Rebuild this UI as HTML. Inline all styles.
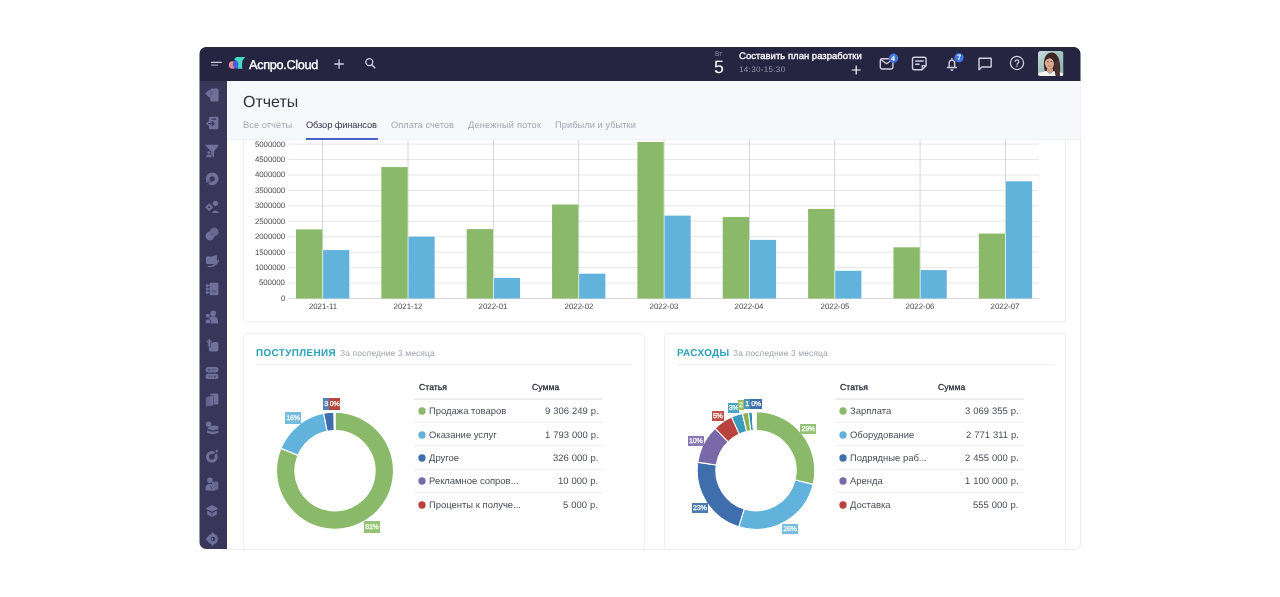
<!DOCTYPE html>
<html><head><meta charset="utf-8"><title>Отчеты</title>
<style>
html,body{margin:0;padding:0;background:#fff;}
body{width:1280px;height:597px;position:relative;overflow:hidden;font-family:"Liberation Sans", sans-serif;}
#win{position:absolute;left:0;top:0;width:1280px;height:597px;will-change:transform;clip-path:inset(47px 199.5px 48px 199.5px round 6.5px);}
#shadow{position:absolute;left:222px;top:78px;width:859.4px;height:471.8px;border-radius:0 0 7px 0;border-right:1px solid #ececee;border-bottom:1px solid #ececee;box-sizing:border-box;}
.abs{position:absolute;}
.t,.tab,.yl,.xl,.row,.amt,.lab{transform:rotate(0.03deg);}
.t{position:absolute;white-space:nowrap;line-height:1;}
.card{position:absolute;border:1px solid #edeff3;border-radius:3px;background:#fff;box-sizing:border-box;}
.tab{position:absolute;top:120.8px;font-size:9.2px;color:#9a9eab;white-space:nowrap;line-height:1;}
.yl{position:absolute;right:995px;font-size:7.85px;color:#4a4a4a;letter-spacing:-0.07px;white-space:nowrap;line-height:1;}
.xl{position:absolute;top:302.8px;width:60px;text-align:center;font-size:7.85px;color:#4a4a4a;white-space:nowrap;line-height:1;}
.row{position:absolute;font-size:9.45px;color:#484b57;white-space:nowrap;line-height:1;}
.amt{position:absolute;font-size:9.45px;color:#484b57;word-spacing:0.35px;white-space:nowrap;line-height:1;text-align:right;}
.dot{position:absolute;width:6.4px;height:6.4px;border-radius:50%;}
.hl{position:absolute;height:1px;background:#eff0f4;}
.lab{position:absolute;font-size:7.1px;color:#f4faf0;text-align:center;white-space:nowrap;letter-spacing:-0.3px;-webkit-text-stroke:0.3px #f4faf0;overflow:hidden;}
</style></head><body>
<div id="shadow"></div>
<div id="win">
<div class="abs" style="left:199px;top:46px;width:883px;height:35px;background:#262541"></div><div class="abs" style="left:199px;top:81px;width:28px;height:470px;background:#38375a"></div><div class="card" style="left:243px;top:130px;width:822.7px;height:191.5px;border-top:none"></div><div class="abs" style="left:227px;top:81px;width:855px;height:57.5px;background:#f6f8fc"></div><div class="abs" style="left:227px;top:138.5px;width:855px;height:1px;background:#eef0f5"></div><svg class="abs" style="left:210px;top:59px" width="14" height="12" viewBox="0 0 14 12"><path d="M1.4 3.4H11.4" stroke="#c9cad8" stroke-width="1.15" stroke-linecap="round" fill="none"/><path d="M1.4 6.1H7.6" stroke="#9697ad" stroke-width="1.15" stroke-linecap="round" fill="none"/></svg><svg class="abs" style="left:228px;top:56px" width="19" height="15" viewBox="0 0 19 15"><ellipse cx="4.6" cy="9" rx="3.8" ry="3.8" fill="#f08598"/><path d="M8.4 3.7C6 4.4 4.8 6.8 4.8 8.6C4.8 10.8 6.4 12.8 8.8 12.8H11.2V3.7Z" fill="#3f63d8"/><path d="M8.6 1H17.4C14.4 3.6 13.2 7 14.6 12.8H10.3V7.4C10.1 5.6 8.8 4.2 6.3 3.5C6.8 2.2 7.6 1.4 8.6 1Z" fill="#45dcc4"/></svg><div class="t" style="left:248.8px;top:58.8px;font-size:12.7px;color:#fff;letter-spacing:-0.31px;-webkit-text-stroke:0.35px #fff">Аспро.Cloud</div><svg class="abs" style="left:333px;top:57.6px" width="12" height="12" viewBox="0 0 12 12"><path d="M6.05 1.2V10.8M1.3 6H10.8" stroke="#cfd0de" stroke-width="1.3" fill="none"/></svg><svg class="abs" style="left:363.5px;top:57.4px" width="12" height="12" viewBox="0 0 12 12"><circle cx="5.3" cy="5.1" r="3.5" stroke="#cfd0de" stroke-width="1.35" fill="none"/><path d="M8 7.9L10.8 10.8" stroke="#cfd0de" stroke-width="1.4" stroke-linecap="round"/></svg><div class="t" style="left:715.4px;top:50.6px;font-size:6.6px;color:#8e8fa6">Вт</div><div class="t" style="left:714.4px;top:58.6px;font-size:17.8px;color:#fff">5</div><div class="t" style="left:738.8px;top:51px;font-size:9.5px;color:#fff;letter-spacing:0.02px;-webkit-text-stroke:0.3px #fff">Составить план разработки</div><div class="t" style="left:738.8px;top:65.6px;font-size:8px;color:#9a9bb0;letter-spacing:0.34px">14:30-15:30</div><svg class="abs" style="left:850px;top:64px" width="12" height="12" viewBox="0 0 12 12"><path d="M6.2 1.5V10.5M1.7 6H10.7" stroke="#fff" stroke-width="1.2" fill="none"/></svg><svg class="abs" style="left:878px;top:50px" width="24" height="24" viewBox="0 0 24 24"><rect x="2.3" y="8.8" width="12.6" height="10.2" rx="1.7" stroke="#cfd0de" stroke-width="1.4" fill="none"/><path d="M3.4 10L8.6 13.8L13.8 10" stroke="#cfd0de" stroke-width="1.3" fill="none" stroke-linejoin="round"/><circle cx="15.5" cy="8.3" r="4.7" fill="#3f74e0"/></svg><div class="t" style="left:891.4px;top:54.6px;font-size:7.4px;color:#fff;-webkit-text-stroke:0.2px #fff">4</div><svg class="abs" style="left:911px;top:55px" width="17" height="17" viewBox="0 0 17 17"><path d="M3.4 2.3H13.2A1.9 1.9 0 0 1 15.1 4.2V10.6L11 14.7H3.4A1.9 1.9 0 0 1 1.5 12.8V4.2A1.9 1.9 0 0 1 3.4 2.3Z" stroke="#cfd0de" stroke-width="1.4" fill="none"/><path d="M15 10.6H11.2V14.4" stroke="#cfd0de" stroke-width="1.2" fill="none"/><path d="M4.2 6H12.6M4.2 9.2H8.6" stroke="#cfd0de" stroke-width="1.6"/></svg><svg class="abs" style="left:943px;top:50px" width="24" height="24" viewBox="0 0 24 24"><path d="M4.4 17.5H13.4M5.9 17.4C6.4 16 6 14.4 6.2 12.4A2.75 2.75 0 0 1 11.6 12.4C11.8 14.4 11.4 16 11.9 17.4" stroke="#cfd0de" stroke-width="1.4" fill="none" stroke-linecap="round" stroke-linejoin="round"/><path d="M8.9 8.4V9.6" stroke="#cfd0de" stroke-width="1.3" stroke-linecap="round"/><path d="M7.6 19.4H10.2A1.3 1.3 0 0 1 7.6 19.4Z" fill="#cfd0de" stroke="#cfd0de" stroke-width="0.5"/><circle cx="16" cy="7.8" r="4.7" fill="#3f74e0"/></svg><div class="t" style="left:957px;top:54.1px;font-size:7.4px;color:#fff;-webkit-text-stroke:0.2px #fff">7</div><svg class="abs" style="left:977px;top:55.5px" width="16" height="16" viewBox="0 0 16 16"><path d="M2.4 2.2H13.6A0.6 0.6 0 0 1 14.2 2.8V10.4A0.6 0.6 0 0 1 13.6 11H5L2 13.8V2.8A0.6 0.6 0 0 1 2.4 2.2Z" stroke="#cfd0de" stroke-width="1.4" fill="none" stroke-linejoin="round"/></svg><svg class="abs" style="left:1008.9px;top:55.2px" width="16" height="16" viewBox="0 0 16 16"><circle cx="8" cy="8" r="6.6" stroke="#cfd0de" stroke-width="1.25" fill="none"/><path d="M6.1 6.5A1.95 1.95 0 0 1 9.95 6.6C9.95 7.9 8 8 8 9.5" stroke="#cfd0de" stroke-width="1.15" fill="none" stroke-linecap="round"/><circle cx="8" cy="11.3" r="0.75" fill="#cfd0de"/></svg><svg class="abs" style="left:1038.3px;top:51px" width="25.5" height="25.2" viewBox="0 0 25 25" preserveAspectRatio="none"><defs><clipPath id="av"><rect width="25" height="25" rx="2.6"/></clipPath><linearGradient id="avg" x1="0" y1="0" x2="1" y2="1"><stop offset="0" stop-color="#c9dadb"/><stop offset="0.5" stop-color="#9fc2bd"/><stop offset="1" stop-color="#8db5b0"/></linearGradient></defs><g clip-path="url(#av)"><rect width="25" height="25" fill="url(#avg)"/><path d="M6.6 19.5C4.6 12 6 2.2 12.8 1.6C19.6 1.4 21.2 9 21.6 14C21.9 18 21.4 22 21.8 25H14L8 20Z" fill="#3a2927"/><ellipse cx="11.2" cy="12.2" rx="4.4" ry="5.9" transform="rotate(-8 11.2 12.2)" fill="#dcaa92"/><path d="M6.4 10.4C7.4 5.6 12.6 4 16.4 7.4C17.6 9 17.4 12 16.8 14.6C16.2 10.6 14.6 8 12.6 7.2C10.4 7 7.8 8.4 6.4 10.4Z" fill="#3a2927"/><ellipse cx="9.6" cy="10.6" rx="0.9" ry="0.5" fill="#3a2927" opacity=".75"/><ellipse cx="13.1" cy="10.2" rx="0.9" ry="0.5" fill="#3a2927" opacity=".75"/><path d="M9.8 14.6Q11.3 15.6 12.8 14.4" stroke="#b86f63" stroke-width=".8" fill="none"/><path d="M0 25V22.4C2 20.8 6 20.6 8.6 19.6L11.6 22.6L14.6 20C17.6 20.2 22.6 20.6 25 22.6V25Z" fill="#f4f0ec"/><path d="M9.2 16.8L14.4 17.2L14.8 20.2L11.6 22.8L8.6 19.8Z" fill="#d39f88"/><path d="M15.6 13C16.6 17 16 21 17.4 25H21.8C21 20 22 14 20 9Z" fill="#4a3230"/></g></svg><svg class="abs" style="left:205.2px;top:88.3px" width="14" height="14" viewBox="0 0 14 14"><rect x="5.2" y=".6" width="8.4" height="12.8" rx="1.5" fill="#70719a"/><path d="M.3 5.6L4.2 1.7 8.1 5.6 4.2 9.5z" fill="#70719a"/><path d="M5.2 2.8L8.1 5.6 5.2 8.4z" fill="#5c5d86"/></svg><svg class="abs" style="left:205.2px;top:116.0px" width="14" height="14" viewBox="0 0 14 14"><path d="M5.4 .7h6.6a1.4 1.4 0 0 1 1.4 1.4v9.8a1.4 1.4 0 0 1-1.4 1.4H5.4a1.4 1.4 0 0 1-1.4-1.4V10L.6 7.6 4 5V2.1A1.4 1.4 0 0 1 5.4.7z" fill="#70719a"/><path d="M3.2 7.6H8.6M6.8 5.4L9 7.6 6.8 9.8" stroke="#38375a" stroke-width="1.3" fill="none"/><path d="M6.6 3.2H11" stroke="#38375a" stroke-width="1.2"/></svg><svg class="abs" style="left:205.2px;top:143.9px" width="14" height="14" viewBox="0 0 14 14"><path d="M.8.8h12.4a.5.5 0 0 1 .4.8L9 7.4v5.2a.6.6 0 0 1-.9.5L6.2 12V7.4L.4 1.6A.5.5 0 0 1 .8.8z" fill="#70719a"/><circle cx="4" cy="8.6" r="1.9" fill="#70719a" stroke="#38375a" stroke-width=".7"/><path d="M.6 13.4a3.4 3.4 0 0 1 6.8 0z" fill="#70719a" stroke="#38375a" stroke-width=".7"/></svg><svg class="abs" style="left:205.2px;top:171.7px" width="14" height="14" viewBox="0 0 14 14"><circle cx="7.2" cy="6.8" r="4.5" fill="none" stroke="#70719a" stroke-width="3.7"/><path d="M1 9.6L5.2 7.4 6.8 10.6 2.6 12.8z" fill="#5c5d86"/><path d="M.4 12.8l3.2-1.9" stroke="#38375a" stroke-width="1"/></svg><svg class="abs" style="left:205.2px;top:199.8px" width="14" height="14" viewBox="0 0 14 14"><path d="M.2 7.2L4.2 3.2l4 4L4.2 11.2z" fill="#70719a"/><path d="M2.8 7.2L4.2 5.8l1.4 1.4L4.2 8.6z" fill="#38375a"/><circle cx="10.5" cy="3.3" r="2.6" fill="#70719a"/><path d="M6.8 13a3.8 3.8 0 0 1 7.2 0z" fill="#70719a"/></svg><svg class="abs" style="left:205.2px;top:227.3px" width="14" height="14" viewBox="0 0 14 14"><circle cx="4.9" cy="9" r="4.4" fill="#70719a"/><circle cx="9.1" cy="5" r="4.4" fill="#70719a" fill-opacity=".85"/><rect x="5.6" y="5.6" width="2.8" height="2.8" fill="#5c5d86"/></svg><svg class="abs" style="left:205.2px;top:254.0px" width="14" height="14" viewBox="0 0 14 14"><path d="M1.8 2.4C4 1.6 5.4 3 7 2.4S10.4.6 12 1.4V7.4C12 9 10.6 10 9 10H2.6A1.6 1.6 0 0 1 1 8.4V3.4A1 1 0 0 1 1.8 2.4z" fill="#70719a"/><path d="M3.4 12.6C8 12.6 11.6 10.4 13.4 6.4" stroke="#70719a" stroke-width="1.5" fill="none" stroke-linecap="round"/></svg><svg class="abs" style="left:205.2px;top:282.1px" width="14" height="14" viewBox="0 0 14 14"><rect x="4.6" y=".7" width="8.8" height="12.6" rx="1.4" fill="#70719a"/><circle cx="2.2" cy="3.6" r="1.5" fill="#70719a"/><circle cx="2.2" cy="7" r="1.5" fill="#70719a"/><circle cx="2.2" cy="10.4" r="1.5" fill="#70719a"/><path d="M2.2 3.6H5M2.2 7H5M2.2 10.4H5" stroke="#70719a" stroke-width="1"/><rect x="6.6" y="8" width="4.8" height="2.4" rx=".6" fill="#5c5d86"/></svg><svg class="abs" style="left:205.2px;top:310.3px" width="14" height="14" viewBox="0 0 14 14"><circle cx="8.2" cy="3.4" r="2.8" fill="#70719a"/><path d="M3.4 13.4V11a4.8 4.8 0 0 1 9.6 0v2.4z" fill="#70719a"/><circle cx="2.9" cy="5.8" r="2" fill="#70719a"/><path d="M.4 13.4v-1.6a2.7 2.7 0 0 1 5.4 0v1.6z" fill="#70719a" stroke="#38375a" stroke-width=".7"/></svg><svg class="abs" style="left:205.2px;top:337.8px" width="14" height="14" viewBox="0 0 14 14"><rect x="3.8" y="4" width="9.6" height="9.4" rx="1.6" fill="#70719a"/><path d="M.4 4.6L4.2.5 8 4.6H5.6V9H2.8V4.6z" fill="#70719a" stroke="#38375a" stroke-width=".6"/></svg><svg class="abs" style="left:205.2px;top:366.0px" width="14" height="14" viewBox="0 0 14 14"><rect x=".6" y="1" width="12.8" height="5.4" rx="2.7" fill="#70719a"/><rect x=".6" y="7.7" width="12.8" height="5.4" rx="2.7" fill="#70719a"/><path d="M3.6 2.2L5.4 3.7 3.6 5.2zM10.4 8.9L8.6 10.4 10.4 11.9z" fill="#38375a"/><rect x="6.2" y="2.8" width="4.6" height="1.8" rx=".9" fill="#5c5d86"/><rect x="3.2" y="9.5" width="4.6" height="1.8" rx=".9" fill="#5c5d86"/></svg><svg class="abs" style="left:205.2px;top:393.0px" width="14" height="14" viewBox="0 0 14 14"><path d="M5.6.6h6.4a1.4 1.4 0 0 1 1.4 1.4v8a1.4 1.4 0 0 1-1.4 1.4H5.6z" fill="#70719a"/><path d="M.6 4.4L5.4 2.6h3.2v10.2L3.8 13.4H.6z" fill="#70719a" fill-opacity=".8" stroke="#38375a" stroke-width=".5"/></svg><svg class="abs" style="left:205.2px;top:421.2px" width="14" height="14" viewBox="0 0 14 14"><circle cx="3.6" cy="3.2" r="2.7" fill="#70719a"/><path d="M2.4 7.6C5 4.4 10 3.6 13.4 5.4V8C10 9.6 5.4 9.6 2.4 7.6z" fill="#70719a"/><path d="M2 9.2C5.4 11 10 11 13.4 9.4v2.4C10 13.6 5.4 13.6 2 11.8z" fill="#70719a"/></svg><svg class="abs" style="left:205.2px;top:449.0px" width="14" height="14" viewBox="0 0 14 14"><circle cx="6.8" cy="7.8" r="4.4" fill="none" stroke="#70719a" stroke-width="3"/><path d="M6.8 7.8L11 3.6" stroke="#38375a" stroke-width="1.6"/><circle cx="11.8" cy="2" r="1.3" fill="#70719a"/></svg><svg class="abs" style="left:205.2px;top:476.8px" width="14" height="14" viewBox="0 0 14 14"><circle cx="4.8" cy="3.2" r="2.7" fill="#70719a"/><path d="M.5 13.4V11a4.3 4.3 0 0 1 8.6 0v2.4z" fill="#70719a"/><path d="M7 4.6h4.8a1.6 1.6 0 0 1 1.6 1.6v4.2c0 1.8-1.6 3-3.2 3H5.6c1.6-1 1.4-2.6 1.4-4z" fill="#70719a" fill-opacity=".85"/><path d="M5 9.4c1.4 0 2 1.2 1.6 2.6" stroke="#38375a" stroke-width=".8" fill="none"/></svg><svg class="abs" style="left:205.2px;top:504.4px" width="14" height="14" viewBox="0 0 14 14"><path d="M7 1L13.6 4.4 7 7.8.4 4.4z" fill="#70719a"/><path d="M2.2 6.6L7 9.2l4.8-2.6v3.8L7 13.2 2.2 10.4z" fill="#70719a"/><path d="M7 9.2v4" stroke="#38375a" stroke-width=".7"/></svg><svg class="abs" style="left:205.2px;top:531.6px" width="14" height="14" viewBox="0 0 14 14"><circle cx="7.6" cy="7" r="5.3" fill="#70719a"/><path d="M7.6.1L9.6 2.6H5.6zM7.6 13.9L9.6 11.4H5.6zM.5 7L3 4.8v4.4z" fill="#70719a"/><circle cx="8" cy="7" r="2.3" fill="#38375a"/><path d="M8 5.5a1.5 1.5 0 0 0 0 3z" fill="#70719a"/></svg><div class="t" style="left:243px;top:93.7px;font-size:16px;color:#30323f">Отчеты</div><div class="tab" style="left:242.8px;color:#a3a6b2;font-size:9.3px;letter-spacing:0.046px">Все отчёты</div><div class="tab" style="left:306px;color:#33364a;font-size:9.3px;letter-spacing:-0.13px">Обзор финансов</div><div class="tab" style="left:390.8px;color:#a3a6b2;font-size:9.3px;letter-spacing:-0.01px">Оплата счетов</div><div class="tab" style="left:467.8px;color:#a3a6b2;font-size:9.3px;letter-spacing:0.165px">Денежный поток</div><div class="tab" style="left:555px;color:#a3a6b2;font-size:9.3px;letter-spacing:0.04px">Прибыли и убытки</div><div class="abs" style="left:306px;top:137.9px;width:71.5px;height:2px;background:#4463c8"></div><svg class="abs" style="left:0;top:139.5px" width="1280" height="180" viewBox="0 139.5 1280 180"><rect x="288.2" y="297.50" width="750.5" height="1" fill="#d9d9d9"/><rect x="288.2" y="282.06" width="750.5" height="1" fill="#e7e7e7"/><rect x="288.2" y="266.62" width="750.5" height="1" fill="#e7e7e7"/><rect x="288.2" y="251.18" width="750.5" height="1" fill="#e7e7e7"/><rect x="288.2" y="235.74" width="750.5" height="1" fill="#e7e7e7"/><rect x="288.2" y="220.30" width="750.5" height="1" fill="#e7e7e7"/><rect x="288.2" y="204.86" width="750.5" height="1" fill="#e7e7e7"/><rect x="288.2" y="189.42" width="750.5" height="1" fill="#e7e7e7"/><rect x="288.2" y="173.98" width="750.5" height="1" fill="#e7e7e7"/><rect x="288.2" y="158.54" width="750.5" height="1" fill="#e7e7e7"/><rect x="288.2" y="143.10" width="750.5" height="1" fill="#e7e7e7"/><rect x="322.20" y="139.5" width="0.9" height="158.5" fill="#d2d2d4"/><rect x="407.55" y="139.5" width="0.9" height="158.5" fill="#d2d2d4"/><rect x="492.90" y="139.5" width="0.9" height="158.5" fill="#d2d2d4"/><rect x="578.25" y="139.5" width="0.9" height="158.5" fill="#d2d2d4"/><rect x="663.60" y="139.5" width="0.9" height="158.5" fill="#d2d2d4"/><rect x="748.95" y="139.5" width="0.9" height="158.5" fill="#d2d2d4"/><rect x="834.30" y="139.5" width="0.9" height="158.5" fill="#d2d2d4"/><rect x="919.65" y="139.5" width="0.9" height="158.5" fill="#d2d2d4"/><rect x="1005.00" y="139.5" width="0.9" height="158.5" fill="#d2d2d4"/><rect x="322.00" y="249.6" width="1.3" height="47.90" fill="#f4fafc"/><rect x="296.00" y="228.9" width="26.3" height="69.10" fill="#8aba69"/><rect x="323.10" y="249.6" width="26.2" height="48.40" fill="#62b3db"/><rect x="407.35" y="236.2" width="1.3" height="61.30" fill="#f4fafc"/><rect x="381.35" y="166.6" width="26.3" height="131.40" fill="#8aba69"/><rect x="408.45" y="236.2" width="26.2" height="61.80" fill="#62b3db"/><rect x="492.70" y="277.4" width="1.3" height="20.10" fill="#f4fafc"/><rect x="466.70" y="228.6" width="26.3" height="69.40" fill="#8aba69"/><rect x="493.80" y="277.4" width="26.2" height="20.60" fill="#62b3db"/><rect x="578.05" y="273.2" width="1.3" height="24.30" fill="#f4fafc"/><rect x="552.05" y="204.0" width="26.3" height="94.00" fill="#8aba69"/><rect x="579.15" y="273.2" width="26.2" height="24.80" fill="#62b3db"/><rect x="663.40" y="215.1" width="1.3" height="82.40" fill="#f4fafc"/><rect x="637.40" y="141.5" width="26.3" height="156.50" fill="#8aba69"/><rect x="664.50" y="215.1" width="26.2" height="82.90" fill="#62b3db"/><rect x="748.75" y="239.4" width="1.3" height="58.10" fill="#f4fafc"/><rect x="722.75" y="216.5" width="26.3" height="81.50" fill="#8aba69"/><rect x="749.85" y="239.4" width="26.2" height="58.60" fill="#62b3db"/><rect x="834.10" y="270.3" width="1.3" height="27.20" fill="#f4fafc"/><rect x="808.10" y="208.5" width="26.3" height="89.50" fill="#8aba69"/><rect x="835.20" y="270.3" width="26.2" height="27.70" fill="#62b3db"/><rect x="919.45" y="269.6" width="1.3" height="27.90" fill="#f4fafc"/><rect x="893.45" y="246.8" width="26.3" height="51.20" fill="#8aba69"/><rect x="920.55" y="269.6" width="26.2" height="28.40" fill="#62b3db"/><rect x="1004.80" y="233.1" width="1.3" height="64.40" fill="#f4fafc"/><rect x="978.80" y="233.1" width="26.3" height="64.90" fill="#8aba69"/><rect x="1005.90" y="180.8" width="26.2" height="117.20" fill="#62b3db"/></svg><div class="yl" style="top:294.90px">0</div><div class="yl" style="top:279.46px">500000</div><div class="yl" style="top:264.02px">1000000</div><div class="yl" style="top:248.58px">1500000</div><div class="yl" style="top:233.14px">2000000</div><div class="yl" style="top:217.70px">2500000</div><div class="yl" style="top:202.26px">3000000</div><div class="yl" style="top:186.82px">3500000</div><div class="yl" style="top:171.38px">4000000</div><div class="yl" style="top:155.94px">4500000</div><div class="yl" style="top:140.50px">5000000</div><div class="xl" style="left:292.60px">2021-11</div><div class="xl" style="left:377.95px">2021-12</div><div class="xl" style="left:463.30px">2022-01</div><div class="xl" style="left:548.65px">2022-02</div><div class="xl" style="left:634.00px">2022-03</div><div class="xl" style="left:719.35px">2022-04</div><div class="xl" style="left:804.70px">2022-05</div><div class="xl" style="left:890.05px">2022-06</div><div class="xl" style="left:975.40px">2022-07</div><div class="card" style="left:243px;top:332.5px;width:401.5px;height:240px"></div><div class="card" style="left:664px;top:332.5px;width:401.7px;height:240px"></div><div class="t" style="left:256.3px;top:348.1px;font-size:9.9px;font-weight:bold;color:#2aa0b6;letter-spacing:0.37px">ПОСТУПЛЕНИЯ</div><div class="t" style="left:339.6px;top:349.3px;font-size:8.5px;color:#a0a3ae;letter-spacing:0.09px">За последние 3 месяца</div><div class="hl" style="left:256px;top:364.2px;width:375.5px"></div><div class="t" style="left:418.8px;top:383.4px;font-size:8.6px;color:#2a2c38;-webkit-text-stroke:0.28px #2a2c38;letter-spacing:0.05px">Статья</div><div class="t" style="left:532.2px;top:383.4px;font-size:8.6px;color:#2a2c38;-webkit-text-stroke:0.28px #2a2c38;letter-spacing:0.05px">Сумма</div><div class="abs" style="left:413.6px;top:398.2px;width:189.39999999999998px;height:2px;background:#eceef2"></div><svg class="abs" style="left:417px;top:406.30px" width="10" height="10" viewBox="0 0 10 10"><circle cx="5" cy="5" r="3.65" fill="#8aba69"/></svg><div class="row" style="left:428.8px;top:406.45px">Продажа товаров</div><div class="amt" style="right:681.9px;top:406.45px">9 306 249 р.</div><div class="hl" style="left:413.6px;top:422.00px;width:189.39999999999998px"></div><svg class="abs" style="left:417px;top:429.63px" width="10" height="10" viewBox="0 0 10 10"><circle cx="5" cy="5" r="3.65" fill="#62b3db"/></svg><div class="row" style="left:428.8px;top:429.78px">Оказание услуг</div><div class="amt" style="right:681.9px;top:429.78px">1 793 000 р.</div><div class="hl" style="left:413.6px;top:445.33px;width:189.39999999999998px"></div><svg class="abs" style="left:417px;top:452.96px" width="10" height="10" viewBox="0 0 10 10"><circle cx="5" cy="5" r="3.65" fill="#3e6eab"/></svg><div class="row" style="left:428.8px;top:453.11px">Другое</div><div class="amt" style="right:681.9px;top:453.11px">326 000 р.</div><div class="hl" style="left:413.6px;top:468.66px;width:189.39999999999998px"></div><svg class="abs" style="left:417px;top:476.29px" width="10" height="10" viewBox="0 0 10 10"><circle cx="5" cy="5" r="3.65" fill="#7a69a8"/></svg><div class="row" style="left:428.8px;top:476.44px">Рекламное сопров...</div><div class="amt" style="right:681.9px;top:476.44px">10 000 р.</div><div class="hl" style="left:413.6px;top:491.99px;width:189.39999999999998px"></div><svg class="abs" style="left:417px;top:499.62px" width="10" height="10" viewBox="0 0 10 10"><circle cx="5" cy="5" r="3.65" fill="#b8433f"/></svg><div class="row" style="left:428.8px;top:499.77px">Проценты к получе...</div><div class="amt" style="right:681.9px;top:499.77px">5 000 р.</div><div class="t" style="left:677.4px;top:348.1px;font-size:9.9px;font-weight:bold;color:#2aa0b6;letter-spacing:0.37px">РАСХОДЫ</div><div class="t" style="left:732.9px;top:349.3px;font-size:8.5px;color:#a0a3ae;letter-spacing:0.09px">За последние 3 месяца</div><div class="hl" style="left:676.5px;top:364.2px;width:377.70000000000005px"></div><div class="t" style="left:839.8px;top:383.4px;font-size:8.6px;color:#2a2c38;-webkit-text-stroke:0.28px #2a2c38;letter-spacing:0.05px">Статья</div><div class="t" style="left:938.4px;top:383.4px;font-size:8.6px;color:#2a2c38;-webkit-text-stroke:0.28px #2a2c38;letter-spacing:0.05px">Сумма</div><div class="abs" style="left:835.4px;top:398.2px;width:188.60000000000002px;height:2px;background:#eceef2"></div><svg class="abs" style="left:838.1px;top:406.30px" width="10" height="10" viewBox="0 0 10 10"><circle cx="5" cy="5" r="3.65" fill="#8aba69"/></svg><div class="row" style="left:850.3px;top:406.45px">Зарплата</div><div class="amt" style="right:261.5px;top:406.45px">3 069 355 р.</div><div class="hl" style="left:835.4px;top:422.00px;width:188.60000000000002px"></div><svg class="abs" style="left:838.1px;top:429.63px" width="10" height="10" viewBox="0 0 10 10"><circle cx="5" cy="5" r="3.65" fill="#62b3db"/></svg><div class="row" style="left:850.3px;top:429.78px">Оборудование</div><div class="amt" style="right:261.5px;top:429.78px">2 771 311 р.</div><div class="hl" style="left:835.4px;top:445.33px;width:188.60000000000002px"></div><svg class="abs" style="left:838.1px;top:452.96px" width="10" height="10" viewBox="0 0 10 10"><circle cx="5" cy="5" r="3.65" fill="#3e6eab"/></svg><div class="row" style="left:850.3px;top:453.11px">Подрядные раб...</div><div class="amt" style="right:261.5px;top:453.11px">2 455 000 р.</div><div class="hl" style="left:835.4px;top:468.66px;width:188.60000000000002px"></div><svg class="abs" style="left:838.1px;top:476.29px" width="10" height="10" viewBox="0 0 10 10"><circle cx="5" cy="5" r="3.65" fill="#7a69a8"/></svg><div class="row" style="left:850.3px;top:476.44px">Аренда</div><div class="amt" style="right:261.5px;top:476.44px">1 100 000 р.</div><div class="hl" style="left:835.4px;top:491.99px;width:188.60000000000002px"></div><svg class="abs" style="left:838.1px;top:499.62px" width="10" height="10" viewBox="0 0 10 10"><circle cx="5" cy="5" r="3.65" fill="#b8433f"/></svg><div class="row" style="left:850.3px;top:499.77px">Доставка</div><div class="amt" style="right:261.5px;top:499.77px">555 000 р.</div><svg class="abs" style="left:0;top:380px" width="1280" height="170" viewBox="0 380 1280 170"><path d="M335.00,412.20A58.5,58.5 0 1 1 280.94,448.35L297.94,455.38A40.1,40.1 0 1 0 335.00,430.60Z" fill="#8aba69" stroke="#fff" stroke-width="1.1"/><path d="M280.94,448.35A58.5,58.5 0 0 1 323.65,413.31L327.22,431.36A40.1,40.1 0 0 0 297.94,455.38Z" fill="#62b3db" stroke="#fff" stroke-width="1.1"/><path d="M323.65,413.31A58.5,58.5 0 0 1 334.04,412.21L334.34,430.61A40.1,40.1 0 0 0 327.22,431.36Z" fill="#3e6eab" stroke="#fff" stroke-width="1.1"/><path d="M334.04,412.21A58.5,58.5 0 0 1 334.58,412.20L334.71,430.60A40.1,40.1 0 0 0 334.34,430.61Z" fill="#fff" stroke="#fff" stroke-width="1.1"/><path d="M334.58,412.20A58.5,58.5 0 0 1 335.00,412.20L335.00,430.60A40.1,40.1 0 0 0 334.71,430.60Z" fill="#fff" stroke="#fff" stroke-width="1.1"/><path d="M756.00,411.80A58.8,58.8 0 0 1 813.16,484.41L794.98,480.02A40.1,40.1 0 0 0 756.00,430.50Z" fill="#8aba69" stroke="#fff" stroke-width="1.1"/><path d="M813.16,484.41A58.8,58.8 0 0 1 738.71,526.80L744.21,508.93A40.1,40.1 0 0 0 794.98,480.02Z" fill="#62b3db" stroke="#fff" stroke-width="1.1"/><path d="M738.71,526.80A58.8,58.8 0 0 1 697.79,462.32L716.30,464.95A40.1,40.1 0 0 0 744.21,508.93Z" fill="#3e6eab" stroke="#fff" stroke-width="1.1"/><path d="M697.79,462.32A58.8,58.8 0 0 1 715.08,428.38L728.09,441.81A40.1,40.1 0 0 0 716.30,464.95Z" fill="#7a69a8" stroke="#fff" stroke-width="1.1"/><path d="M715.08,428.38A58.8,58.8 0 0 1 731.58,417.11L739.35,434.12A40.1,40.1 0 0 0 728.09,441.81Z" fill="#b8433f" stroke="#fff" stroke-width="1.1"/><path d="M731.58,417.11A58.8,58.8 0 0 1 742.38,413.40L746.71,431.59A40.1,40.1 0 0 0 739.35,434.12Z" fill="#3a9bbd" stroke="#fff" stroke-width="1.1"/><path d="M742.38,413.40A58.8,58.8 0 0 1 748.51,412.28L750.89,430.83A40.1,40.1 0 0 0 746.71,431.59Z" fill="#8fb051" stroke="#fff" stroke-width="1.1"/><path d="M748.51,412.28A58.8,58.8 0 0 1 752.30,411.92L753.47,430.58A40.1,40.1 0 0 0 750.89,430.83Z" fill="#2f8fb0" stroke="#fff" stroke-width="1.1"/><path d="M752.30,411.92A58.8,58.8 0 0 1 752.71,411.89L753.76,430.56A40.1,40.1 0 0 0 753.47,430.58Z" fill="#cfe3ee" stroke="#fff" stroke-width="1.1"/><path d="M752.71,411.89A58.8,58.8 0 0 1 756.00,411.80L756.00,430.50A40.1,40.1 0 0 0 753.76,430.56Z" fill="#ffffff" stroke="#fff" stroke-width="1.1"/></svg><div class="lab" style="left:364.1px;top:521.1px;width:15.8px;height:11.8px;line-height:12.4px;background:#95c277">81%</div><div class="lab" style="left:284.8px;top:412.3px;width:16.0px;height:12.3px;line-height:12.9px;background:#74bce0">16%</div><div class="lab" style="left:323.3px;top:398.3px;width:6.2px;height:12.0px;line-height:12.6px;background:#5580b8">3</div><div class="lab" style="left:329.3px;top:398.3px;width:11.4px;height:12.0px;line-height:12.6px;background:#b8433f">0%</div><div class="lab" style="left:800.3px;top:424px;width:16.4px;height:10.0px;line-height:10.6px;background:#95c277">29%</div><div class="lab" style="left:782.3px;top:523.8px;width:15.8px;height:10.0px;line-height:10.6px;background:#74bce0">26%</div><div class="lab" style="left:692.1px;top:502.5px;width:15.5px;height:10.0px;line-height:10.6px;background:#4d7ab3">23%</div><div class="lab" style="left:688.3px;top:435.8px;width:15.5px;height:10.0px;line-height:10.6px;background:#8978b4">10%</div><div class="lab" style="left:712.2px;top:411px;width:11.5px;height:10.0px;line-height:10.6px;background:#c0524e">5%</div><div class="lab" style="left:728px;top:402.7px;width:11.2px;height:10.0px;line-height:10.6px;background:#4aa5c4">3%</div><div class="lab" style="left:737.8px;top:400px;width:5.9px;height:9.8px;line-height:10.4px;background:#9bbc62">2</div><div class="lab" style="left:743.5px;top:399.4px;width:6.2px;height:9.9px;line-height:10.5px;background:#4a98b4">1</div><div class="lab" style="left:749.5px;top:399.1px;width:12.0px;height:9.7px;line-height:10.3px;background:#3e6eab">0%</div></div></body></html>
